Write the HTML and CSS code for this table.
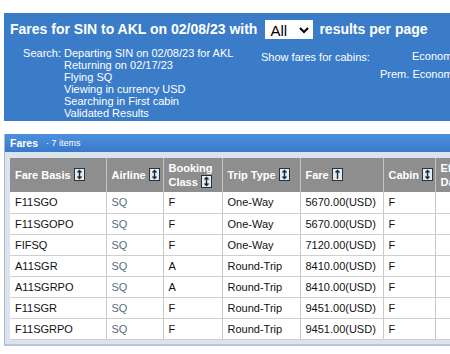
FILE: index.html
```html
<!DOCTYPE html>
<html>
<head>
<meta charset="utf-8">
<link rel="stylesheet" href="styles.css">
</head>
<body>
<div class="page">
  <div class="search-box">
    <div class="title">Fares for SIN to AKL on 02/08/23 with <span class="select">All<svg class="chev" width="10" height="7" viewBox="0 0 10 7"><path d="M1 1 L5 5 L9 1" fill="none" stroke="#000" stroke-width="2"/></svg></span> results per page</div>
    <div class="info">
      <div class="search">
        <div class="label">Search:</div>
        <div class="values">
          <div>Departing SIN on 02/08/23 for AKL</div>
          <div>Returning on 02/17/23</div>
          <div>Flying SQ</div>
          <div>Viewing in currency USD</div>
          <div>Searching in First cabin</div>
          <div>Validated Results</div>
        </div>
      </div>
      <div class="cabins">
        <div class="cab-label">Show fares for cabins:</div>
        <div class="cab-list">
          <div class="cab1">Economy</div>
          <div class="cab2">Prem. Economy</div>
        </div>
      </div>
    </div>
  </div>

  <div class="panel">
    <div class="panel-head"><span class="ph-title">Fares</span><span class="ph-count">· 7 items</span></div>
    <div class="panel-body">
      <table class="fares">
        <thead>
          <tr>
            <th class="c1">Fare Basis <span class="sort"><svg width="11" height="13" viewBox="0 0 11 13"><path d="M5.5 2.5 L5.5 10.5 M3.5 4.5 L5.5 2.5 L7.5 4.5 M3.5 8.5 L5.5 10.5 L7.5 8.5" fill="none" stroke="#1c2a38" stroke-width="1.4"/></svg></span></th>
            <th class="c2">Airline <span class="sort"><svg width="11" height="13" viewBox="0 0 11 13"><path d="M5.5 2.5 L5.5 10.5 M3.5 4.5 L5.5 2.5 L7.5 4.5 M3.5 8.5 L5.5 10.5 L7.5 8.5" fill="none" stroke="#1c2a38" stroke-width="1.4"/></svg></span></th>
            <th class="c3">Booking<br>Class <span class="sort"><svg width="11" height="13" viewBox="0 0 11 13"><path d="M5.5 2.5 L5.5 10.5 M3.5 4.5 L5.5 2.5 L7.5 4.5 M3.5 8.5 L5.5 10.5 L7.5 8.5" fill="none" stroke="#1c2a38" stroke-width="1.4"/></svg></span></th>
            <th class="c4">Trip Type <span class="sort"><svg width="11" height="13" viewBox="0 0 11 13"><path d="M5.5 2.5 L5.5 10.5 M3.5 4.5 L5.5 2.5 L7.5 4.5 M3.5 8.5 L5.5 10.5 L7.5 8.5" fill="none" stroke="#1c2a38" stroke-width="1.4"/></svg></span></th>
            <th class="c5">Fare <span class="sort"><svg width="11" height="13" viewBox="0 0 11 13"><path d="M5.5 2.5 L5.5 11 M3.5 4.5 L5.5 2.5 L7.5 4.5" fill="none" stroke="#1c2a38" stroke-width="1.4"/></svg></span></th>
            <th class="c6">Cabin <span class="sort"><svg width="11" height="13" viewBox="0 0 11 13"><path d="M5.5 2.5 L5.5 10.5 M3.5 4.5 L5.5 2.5 L7.5 4.5 M3.5 8.5 L5.5 10.5 L7.5 8.5" fill="none" stroke="#1c2a38" stroke-width="1.4"/></svg></span></th>
            <th class="c7">Effective<br>Date</th>
          </tr>
        </thead>
        <tbody>
          <tr><td>F11SGO</td><td class="air">SQ</td><td>F</td><td>One-Way</td><td>5670.00(USD)</td><td>F</td><td></td></tr>
          <tr><td>F11SGOPO</td><td class="air">SQ</td><td>F</td><td>One-Way</td><td>5670.00(USD)</td><td>F</td><td></td></tr>
          <tr><td>FIFSQ</td><td class="air">SQ</td><td>F</td><td>One-Way</td><td>7120.00(USD)</td><td>F</td><td></td></tr>
          <tr><td>A11SGR</td><td class="air">SQ</td><td>A</td><td>Round-Trip</td><td>8410.00(USD)</td><td>F</td><td></td></tr>
          <tr><td>A11SGRPO</td><td class="air">SQ</td><td>A</td><td>Round-Trip</td><td>8410.00(USD)</td><td>F</td><td></td></tr>
          <tr><td>F11SGR</td><td class="air">SQ</td><td>F</td><td>Round-Trip</td><td>9451.00(USD)</td><td>F</td><td></td></tr>
          <tr><td>F11SGRPO</td><td class="air">SQ</td><td>F</td><td>Round-Trip</td><td>9451.00(USD)</td><td>F</td><td></td></tr>
        </tbody>
      </table>
    </div>
  </div>
</div>
</body>
</html>
```

FILE: styles.css
```css
html, body {
  margin: 0;
  padding: 0;
  background: #fff;
  overflow: hidden;
}
body {
  font-family: "Liberation Sans", Arial, sans-serif;
  width: 450px;
  height: 354px;
}
.page {
  padding: 13px 0 0 4px;
  width: 446px;
  overflow: hidden;
}
.search-box {
  background: #3b7cc9;
  color: #fff;
  height: 108px;
  width: 520px;
  box-sizing: border-box;
  padding: 7px 0 0 6px;
}
.title {
  font-size: 14px;
  font-weight: bold;
  line-height: 19px;
  white-space: nowrap;
  display: flex;
  align-items: center;
}
.select {
  display: inline-flex;
  align-items: center;
  justify-content: space-between;
  background: #fff;
  color: #000;
  font-weight: normal;
  font-size: 15px;
  width: 48px;
  height: 19px;
  box-sizing: border-box;
  padding: 1px 4px 0 5px;
  margin: 0 6px 0 8px;
}
.chev { margin-top: 1px; }
.info {
  display: flex;
  font-size: 11px;
  line-height: 12px;
  margin-top: 8px;
}
.search {
  display: flex;
  width: 251px;
}
.label {
  width: 51px;
  text-align: right;
  padding-right: 3px;
}
.cabins {
  display: flex;
  padding-top: 4px;
  white-space: nowrap;
}
.cab-label {
  width: 119px;
}
.cab-list {
  width: 100px;
}
.cab1 {
  margin-top: -1px;
  padding-left: 32px;
}
.cab2 {
  margin-top: 6px;
}
.panel {
  margin-top: 13px;
  background: #dbe3ec;
  border-left: 1px solid #a9b8c9;
  height: 212px;
  box-sizing: border-box;
  border-bottom: 2px solid #b7c7da;
  overflow: hidden;
}
.panel-head {
  height: 18px;
  background: linear-gradient(#4d90e0, #3a79c9);
  color: #fff;
  display: flex;
  align-items: center;
  padding-left: 5px;
}
.ph-title {
  font-size: 10.5px;
  font-weight: bold;
}
.ph-count {
  font-size: 9px;
  margin-left: 8px;
}
.panel-body {
  padding: 6px 0 0 5px;
}
.fares {
  border-collapse: collapse;
  background: #fff;
  font-size: 11px;
  table-layout: fixed;
  width: 480px;
}
.fares th {
  background: #8e8e8e;
  color: #fff;
  font-weight: bold;
  text-align: left;
  height: 34px;
  padding: 0 4px 0 5px;
  line-height: 14px;
  border-right: 1px solid #c2c2c2;
  box-sizing: border-box;
  white-space: nowrap;
}
.fares td {
  height: 21px;
  padding: 0 4px 0 5px;
  border-right: 1px solid #c8c8c8;
  border-bottom: 1px solid #cfcfcf;
  box-sizing: border-box;
  color: #111;
  white-space: nowrap;
}
.fares td.air {
  color: #5a6b82;
}
.c1 { width: 96px; }
.c2 { width: 57px; }
.c3 { width: 59px; }
.c4 { width: 78px; }
.c5 { width: 83px; }
.c6 { width: 52px; }
.c7 { width: 55px; }
.sort {
  display: inline-block;
  vertical-align: -2px;
  width: 11px;
  height: 13px;
  background: #e3ecf1;
  border: 1px solid #2a3440;
  box-sizing: border-box;
  line-height: 0;
}
.sort svg {
  margin: -1px 0 0 -1px;
}
```
